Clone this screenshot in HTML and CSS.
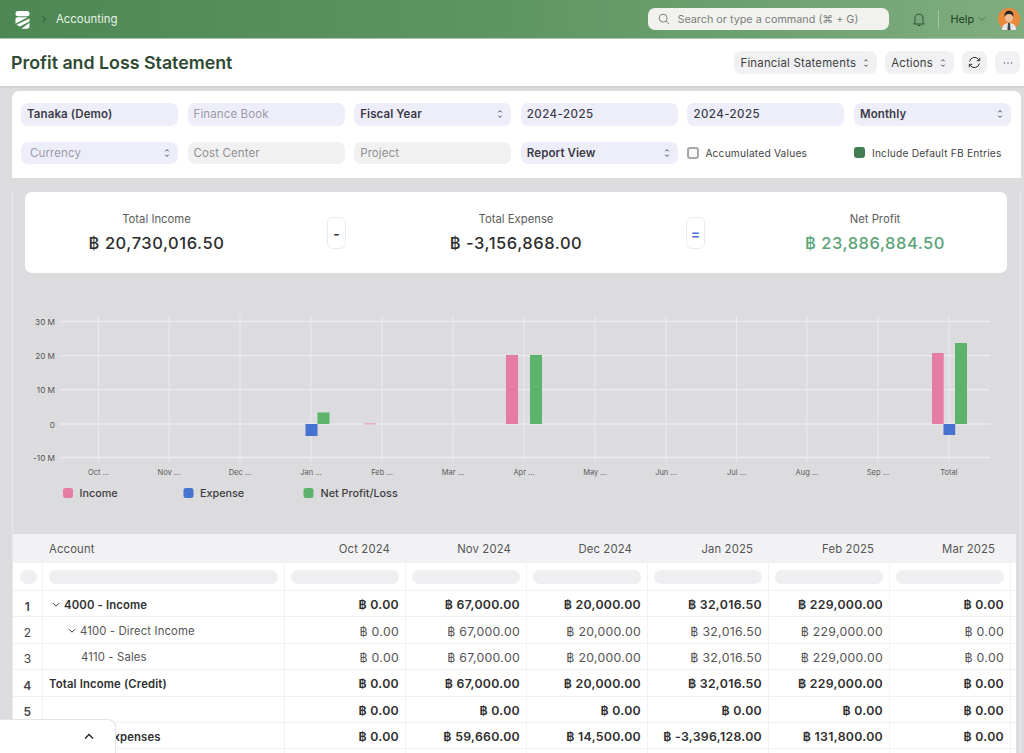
FILE: index.html
```html
<!DOCTYPE html>
<html lang="en">
<head>
<meta charset="utf-8">
<title>Profit and Loss Statement</title>
<link rel="stylesheet" href="styles.css">
</head>
<body>
<header class="nav">
  <div class="nav-left">
    <svg class="logo" width="15" height="18" viewBox="0 0 15 18"><rect x="0.500" y="0" width="14" height="5.200" rx="2.500" fill="#fff"/><path d="M0.500 8.500C0.500 7.200 1.500 6.300 2.800 6.300H12.600L0.500 12.800Z" fill="#fff"/><path d="M14.500 7.400V10.400L4.800 15.600 1.600 13.800Z" fill="#fff"/><path d="M14.500 11.800V15C14.500 16.700 13.300 17.800 12 17.800H6.400Z" fill="#fff"/></svg>
    <svg class="crumb-sep" width="6" height="8" viewBox="0 0 6 8"><path d="M1.500 1L4.500 4L1.500 7" fill="none" stroke="#2c4f31" stroke-width="1"/></svg>
    <span class="crumb">Accounting</span>
  </div>
  <div class="nav-right">
    <div class="search">
      <svg width="12" height="12" viewBox="0 0 13 13"><circle cx="5.600" cy="5.600" r="4.300" fill="none" stroke="#777" stroke-width="1"/><path d="M8.800 8.800L12 12" stroke="#777" stroke-width="1"/></svg>
      <span>Search or type a command (⌘ + G)</span>
    </div>
    <svg class="bell" width="14" height="15" viewBox="0 0 14 15"><path d="M3 10.500V6.200a4 4 0 0 1 8 0v4.300l1.300 1.500H1.700Z" fill="none" stroke="#2f5236" stroke-width="1"/><path d="M5.500 13.500h3" stroke="#2f5236" stroke-width="1"/></svg>
    <span class="nav-div"></span>
    <span class="help">Help</span>
    <svg class="help-chev" width="8" height="6" viewBox="0 0 8 6"><path d="M0.800 1.200L4 4.400L7.200 1.200" fill="none" stroke="#4d7a55" stroke-width="1"/></svg>
    <svg class="avatar" width="22" height="22" viewBox="0 0 22 22"><circle cx="11" cy="11" r="11" fill="#e98a3c"/><path d="M4 22c0-5 3-7 7-7s7 2 7 7Z" fill="#e8e6e6"/><path d="M10 15h2l.6 7h-3.200Z" fill="#3c4450"/><ellipse cx="11" cy="9.800" rx="4" ry="4.600" fill="#efbd96"/><path d="M6.600 9c-.6-4.600 2-6.200 4.400-6.200 2.800 0 5 1.800 4.400 6.200-.7-2-1.800-3-4.400-3-2.600 0-3.700 1-4.400 3Z" fill="#272321"/></svg>
  </div>
</header>

<section class="titlebar">
  <h1>Profit and Loss Statement</h1>
  <div class="actions">
    <button class="btn">Financial Statements <svg class="updown" width="6" height="10" viewBox="0 0 6 10"><use href="#ud"/></svg></button>
    <button class="btn">Actions <svg class="updown" width="6" height="10" viewBox="0 0 6 10"><use href="#ud"/></svg></button>
    <button class="btn icon"><svg width="13" height="13" viewBox="0 0 13 13"><path d="M1.600 5.500A5 5 0 0 1 10.400 3.200L11.500 4.500M11.400 7.500A5 5 0 0 1 2.600 9.800L1.500 8.500" fill="none" stroke="#333" stroke-width="1"/><path d="M11.700 1.800V4.700H8.800M1.300 11.200V8.300H4.200" fill="none" stroke="#333" stroke-width="1"/></svg></button>
    <button class="btn icon"><svg width="10" height="4" viewBox="0 0 10 4"><circle cx="1.500" cy="2" r="0.700" fill="#555"/><circle cx="5" cy="2" r="0.700" fill="#555"/><circle cx="8.500" cy="2" r="0.700" fill="#555"/></svg></button>
  </div>
</section>

<svg class="defs" width="0" height="0"><defs><g id="ud"><path d="M1.300 3.300L3 1.600L4.700 3.300M1.300 6.700L3 8.400L4.700 6.700" fill="none" stroke="#444" stroke-width="1"/></g></defs></svg>

<main class="page">
  <section class="filters">
    <div class="field strong">Tanaka (Demo)</div>
    <div class="field ph">Finance Book</div>
    <div class="field strong sel">Fiscal Year <svg class="updown" width="6" height="10" viewBox="0 0 6 10"><use href="#ud"/></svg></div>
    <div class="field value">2024-2025</div>
    <div class="field value">2024-2025</div>
    <div class="field strong sel">Monthly <svg class="updown" width="6" height="10" viewBox="0 0 6 10"><use href="#ud"/></svg></div>
    <div class="field ph sel indent">Currency <svg class="updown" width="6" height="10" viewBox="0 0 6 10"><use href="#ud"/></svg></div>
    <div class="field ph grey">Cost Center</div>
    <div class="field ph grey">Project</div>
    <div class="field strong sel">Report View <svg class="updown" width="6" height="10" viewBox="0 0 6 10"><use href="#ud"/></svg></div>
    <label class="check"><span class="box"></span>Accumulated Values</label>
    <label class="check"><span class="box on"></span>Include Default FB Entries</label>
  </section>

  <section class="report">
    <div class="summary">
      <div class="stat stat-a"><div class="stat-label">Total Income</div><div class="stat-value">฿ 20,730,016.50</div></div>
      <div class="op">-</div>
      <div class="stat stat-b"><div class="stat-label">Total Expense</div><div class="stat-value">฿ -3,156,868.00</div></div>
      <div class="op eq">=</div>
      <div class="stat stat-c"><div class="stat-label">Net Profit</div><div class="stat-value green">฿ 23,886,884.50</div></div>
    </div>

    <svg class="chart" width="1007" height="261" viewBox="13 273 1007 261">
      <g class="grid">
        <path d="M60 321.500H990M60 355.700H990M60 389.700H990M60 424H990M60 457.500H990"/>
        <path class="thin" d="M98.500 316V462M169 316V462M240 316V462M311 316V462M382 316V462M453 316V462M524 316V462M595 316V462M666 316V462M736.500 316V462M807 316V462M878 316V462M949 316V462"/>
      </g>
      <g class="ylab">
        <text x="55" y="325">30 M</text><text x="55" y="359">20 M</text><text x="55" y="393">10 M</text><text x="55" y="428">0</text><text x="55" y="461">-10 M</text>
      </g>
      <g class="xlab">
        <text x="98.500" y="475">Oct ...</text><text x="169" y="475">Nov ...</text><text x="240" y="475">Dec ...</text><text x="311" y="475">Jan ...</text><text x="382" y="475">Feb ...</text><text x="453" y="475">Mar ...</text><text x="524" y="475">Apr ...</text><text x="595" y="475">May ...</text><text x="666" y="475">Jun ...</text><text x="736.500" y="475">Jul ...</text><text x="807" y="475">Aug ...</text><text x="878" y="475">Sep ...</text><text x="949" y="475">Total</text>
      </g>
      <rect class="pink" x="364" y="423.500" width="12" height="0.800"/>
      <rect class="blue" x="305.500" y="424" width="12" height="12"/>
      <rect class="grn" x="317.500" y="412.500" width="12" height="11.500"/>
      <rect class="pink" x="506" y="355" width="12" height="69"/>
      <rect class="grn" x="530" y="355" width="12" height="69"/>
      <rect class="pink" x="932" y="353" width="11.700" height="71"/>
      <rect class="blue" x="943.500" y="424" width="11.700" height="11"/>
      <rect class="grn" x="955" y="343" width="12" height="81"/>
      <rect class="pink" x="63" y="488" width="10" height="10" rx="2.500"/>
      <rect class="blue" x="183.500" y="488" width="10" height="10" rx="2.500"/>
      <rect class="grn" x="303.500" y="488" width="10" height="10" rx="2.500"/>
      <g class="leg"><text x="79.500" y="496.500">Income</text><text x="200" y="496.500">Expense</text><text x="320.500" y="496.500">Net Profit/Loss</text></g>
    </svg>

    <div class="table">
      <div class="row head">
        <div class="cell idx"></div><div class="cell acc">Account</div>
        <div class="cell num">Oct 2024</div><div class="cell num">Nov 2024</div><div class="cell num">Dec 2024</div><div class="cell num">Jan 2025</div><div class="cell num">Feb 2025</div><div class="cell num">Mar 2025</div>
      </div>
      <div class="row filt">
        <div class="cell idx"><i class="pill"></i></div><div class="cell"><i class="pill"></i></div>
        <div class="cell"><i class="pill"></i></div><div class="cell"><i class="pill"></i></div><div class="cell"><i class="pill"></i></div><div class="cell"><i class="pill"></i></div><div class="cell"><i class="pill"></i></div><div class="cell"><i class="pill"></i></div>
      </div>
      <div class="row bold">
        <div class="cell idx">1</div><div class="cell acc lvl0"><svg class="chev" width="8" height="6" viewBox="0 0 8 6"><path d="M1 1.200L4 4.200L7 1.200" fill="none" stroke="#333" stroke-width="1"/></svg>4000 - Income</div>
        <div class="cell num">฿ 0.00</div><div class="cell num">฿ 67,000.00</div><div class="cell num">฿ 20,000.00</div><div class="cell num">฿ 32,016.50</div><div class="cell num">฿ 229,000.00</div><div class="cell num">฿ 0.00</div>
      </div>
      <div class="row">
        <div class="cell idx">2</div><div class="cell acc lvl1"><svg class="chev" width="8" height="6" viewBox="0 0 8 6"><path d="M1 1.200L4 4.200L7 1.200" fill="none" stroke="#333" stroke-width="1"/></svg>4100 - Direct Income</div>
        <div class="cell num">฿ 0.00</div><div class="cell num">฿ 67,000.00</div><div class="cell num">฿ 20,000.00</div><div class="cell num">฿ 32,016.50</div><div class="cell num">฿ 229,000.00</div><div class="cell num">฿ 0.00</div>
      </div>
      <div class="row">
        <div class="cell idx">3</div><div class="cell acc lvl2">4110 - Sales</div>
        <div class="cell num">฿ 0.00</div><div class="cell num">฿ 67,000.00</div><div class="cell num">฿ 20,000.00</div><div class="cell num">฿ 32,016.50</div><div class="cell num">฿ 229,000.00</div><div class="cell num">฿ 0.00</div>
      </div>
      <div class="row bold">
        <div class="cell idx">4</div><div class="cell acc">Total Income (Credit)</div>
        <div class="cell num">฿ 0.00</div><div class="cell num">฿ 67,000.00</div><div class="cell num">฿ 20,000.00</div><div class="cell num">฿ 32,016.50</div><div class="cell num">฿ 229,000.00</div><div class="cell num">฿ 0.00</div>
      </div>
      <div class="row bold">
        <div class="cell idx">5</div><div class="cell acc"></div>
        <div class="cell num">฿ 0.00</div><div class="cell num">฿ 0.00</div><div class="cell num">฿ 0.00</div><div class="cell num">฿ 0.00</div><div class="cell num">฿ 0.00</div><div class="cell num">฿ 0.00</div>
      </div>
      <div class="row bold">
        <div class="cell idx">6</div><div class="cell acc lvl0 nochev">5000 - Expenses</div>
        <div class="cell num">฿ 0.00</div><div class="cell num">฿ 59,660.00</div><div class="cell num">฿ 14,500.00</div><div class="cell num">฿ -3,396,128.00</div><div class="cell num">฿ 131,800.00</div><div class="cell num">฿ 0.00</div>
      </div>
      <div class="row">
        <div class="cell idx"></div><div class="cell acc"></div><div class="cell num"></div><div class="cell num"></div><div class="cell num"></div><div class="cell num"></div><div class="cell num"></div><div class="cell num"></div>
      </div>
    </div>
  </section>
</main>

<div class="corner">
  <svg width="10" height="7" viewBox="0 0 10 7"><path d="M1 5.500L5 1.500L9 5.500" fill="none" stroke="#222" stroke-width="1.400"/></svg>
</div>
</body>
</html>
```
FILE: styles.css
```css
* { box-sizing: border-box; }
html, body { margin: 0; height: 753px; overflow: hidden; }
body { background: #dcdbdd; font-family: Inter, "Liberation Sans", sans-serif; color: #333; position: relative; width: 1024px; }
.defs { position: absolute; }

.nav { height: 39px; display: flex; justify-content: space-between; align-items: center; background: linear-gradient(90deg, #4d8753 0%, #5e9663 50%, #80ad80 100%); border-bottom: 1px solid #a9c8ab; padding: 0 4px 0 15px; }
.nav-left, .nav-right { display: flex; align-items: center; }
.logo { display: block; margin-top: 2px; }
.crumb-sep { margin-left: 11px; }
.crumb { margin-left: 9px; color: #e6f2e4; font-size: 11.400px; }
.search { width: 241px; height: 22px; background: #f1f2ee; border-radius: 7px; display: flex; align-items: center; gap: 7px; padding: 0 9px 0 10px; color: #7d7f7e; font-size: 10.800px; white-space: nowrap; }
.bell { margin-left: 23px; }
.nav-div { width: 1px; height: 19px; background: #a3c5a5; margin-left: 12px; }
.help { margin-left: 11px; font-size: 10.800px; color: #173a20; }
.help-chev { margin-left: 4px; }
.avatar { margin-left: 12px; }

.titlebar { height: 47px; background: #fff; display: flex; justify-content: space-between; align-items: center; padding: 0 4px 0 11px; box-shadow: 0 1px 2px rgba(0,0,0,.08); position: relative; }
h1 { margin: 0; font-size: 17.800px; font-weight: 600; color: #2f4a33; }
.actions { display: flex; gap: 8px; }
.btn { height: 23px; border: 0; background: #f1f1f3; border-radius: 7px; font: 11.400px Inter, sans-serif; color: #3d3d3d; padding: 0 8px 0 6px; display: flex; align-items: center; gap: 7px; letter-spacing: 0.2px; }
.btn.icon { width: 25px; justify-content: center; padding: 0; }

.page { padding: 5px 3px 0 12px; }
.filters { width: 1009px; height: 87px; background: #fff; border-radius: 7px 7px 0 0; padding: 12px 9px 0 9px; display: grid; grid-template-columns: repeat(6, 157px); column-gap: 9.600px; row-gap: 16px; grid-auto-rows: 22.600px; }
.field { background: #eeeefb; border-radius: 7px; font-size: 11.500px; display: flex; align-items: center; justify-content: space-between; padding: 0 6px; letter-spacing: 0.1px; }
.field:not(.sel) { justify-content: flex-start; }
.strong { font-weight: 600; color: #3b3b46; }
.value { font-weight: 500; color: #3b3b46; letter-spacing: 0.45px; }
.ph { color: #9b9aa6; }
.ph.indent { padding-left: 9px; }
.grey { background: #f1f1f2; color: #8f8f90; }
.sel { padding-right: 8px; }
.check { display: flex; align-items: center; font-size: 10.200px; color: #3f3f45; gap: 6px; letter-spacing: 0.2px; white-space: nowrap; }
.box { width: 12px; height: 12px; border-radius: 3px; border: 2px solid #a8a8ac; background: #f7f7f7; flex: none; }
.box.on { background: #417d4f; border-color: #417d4f; width: 11px; height: 11px; margin-right: 1px; }

.report { width: 1009px; border-left: 1px solid #e8e8ea; border-right: 1px solid #e8e8ea; }
.summary { margin: 14px 13px 0 12px; height: 81px; background: #fff; border-radius: 7px; display: flex; align-items: center; }
.stat { text-align: center; flex: none; }
.stat-a { width: 263px; }
.stat-b { width: 340px; }
.stat-c { width: 302px; padding-left: 38px; }
.stat-label { font-size: 11.300px; color: #5c5c5c; margin-bottom: 7px; }
.stat-value { font-size: 16.500px; font-weight: 500; color: #2d2d2d; letter-spacing: 0.55px; }
.stat-value.green { color: #5aa377; }
.op { width: 19px; height: 32px; flex: none; border: 1px solid #ececee; border-radius: 6px; display: flex; align-items: center; justify-content: center; font-size: 14px; font-weight: 600; color: #333; margin-top: 1px; margin-left: 39px; }
.op.eq { color: #4a74d0; margin-left: 0; }

.chart { display: block; width: 1007px; height: 261px; }
.grid path { stroke: #ececee; stroke-width: 1.300; fill: none; }
.grid path.thin { stroke-width: 1; }
.ylab text { font-size: 8.200px; fill: #555; text-anchor: end; }
.xlab text { font-size: 7.500px; fill: #5a5a5a; text-anchor: middle; }
.leg text { font-size: 10.800px; font-weight: 500; fill: #3d3d42; }
.pink { fill: #e57da3; }
.blue { fill: #4672d2; }
.grn { fill: #5db26c; }

.table { width: 1003px; background: #fff; overflow: hidden; }
.row { display: grid; grid-template-columns: 30px 242px repeat(6, 121px); height: 26.400px; border-bottom: 1px solid #f0f0f2; font-size: 12.300px; color: #555; }
.cell { display: flex; align-items: center; border-right: 1px solid #f3f3f5; padding: 2px 6px 0; letter-spacing: 0.3px; white-space: nowrap; min-width: 0; }
.idx { justify-content: center; color: #444; padding: 5px 0 0; font-size: 12px; }
.acc { padding-left: 6px; font-size: 11.300px; letter-spacing: 0.15px; }
.num { justify-content: flex-end; padding-right: 6px; }
.bold { font-weight: 600; color: #2f2f2f; }
.head { height: 29px; background: #f2f2f4; border: 0; font-weight: 400; color: #555; font-size: 11.300px; }
.head .cell { border: 0; padding-top: 0; letter-spacing: 0.15px; }
.head .num { padding-right: 16px; }
.filt { height: 28px; }
.filt .cell { padding-top: 0; }
.pill { display: block; width: 100%; height: 14px; border-radius: 7px; background: #efeff1; }
.filt .idx { padding: 0 5px 0 7px; }
.lvl0 { padding-left: 9px; }
.lvl1 { padding-left: 25px; }
.lvl2 { padding-left: 38px; }
.chev { margin-right: 4px; flex: none; }
.nochev { padding-left: 22px; }

.corner { position: absolute; left: 0; top: 719px; width: 116px; height: 34px; background: #fff; border: 1px solid #e4e4e6; border-left: 0; border-bottom: 0; border-radius: 0 8px 0 0; display: flex; align-items: center; justify-content: flex-end; padding-right: 21px; }
```
